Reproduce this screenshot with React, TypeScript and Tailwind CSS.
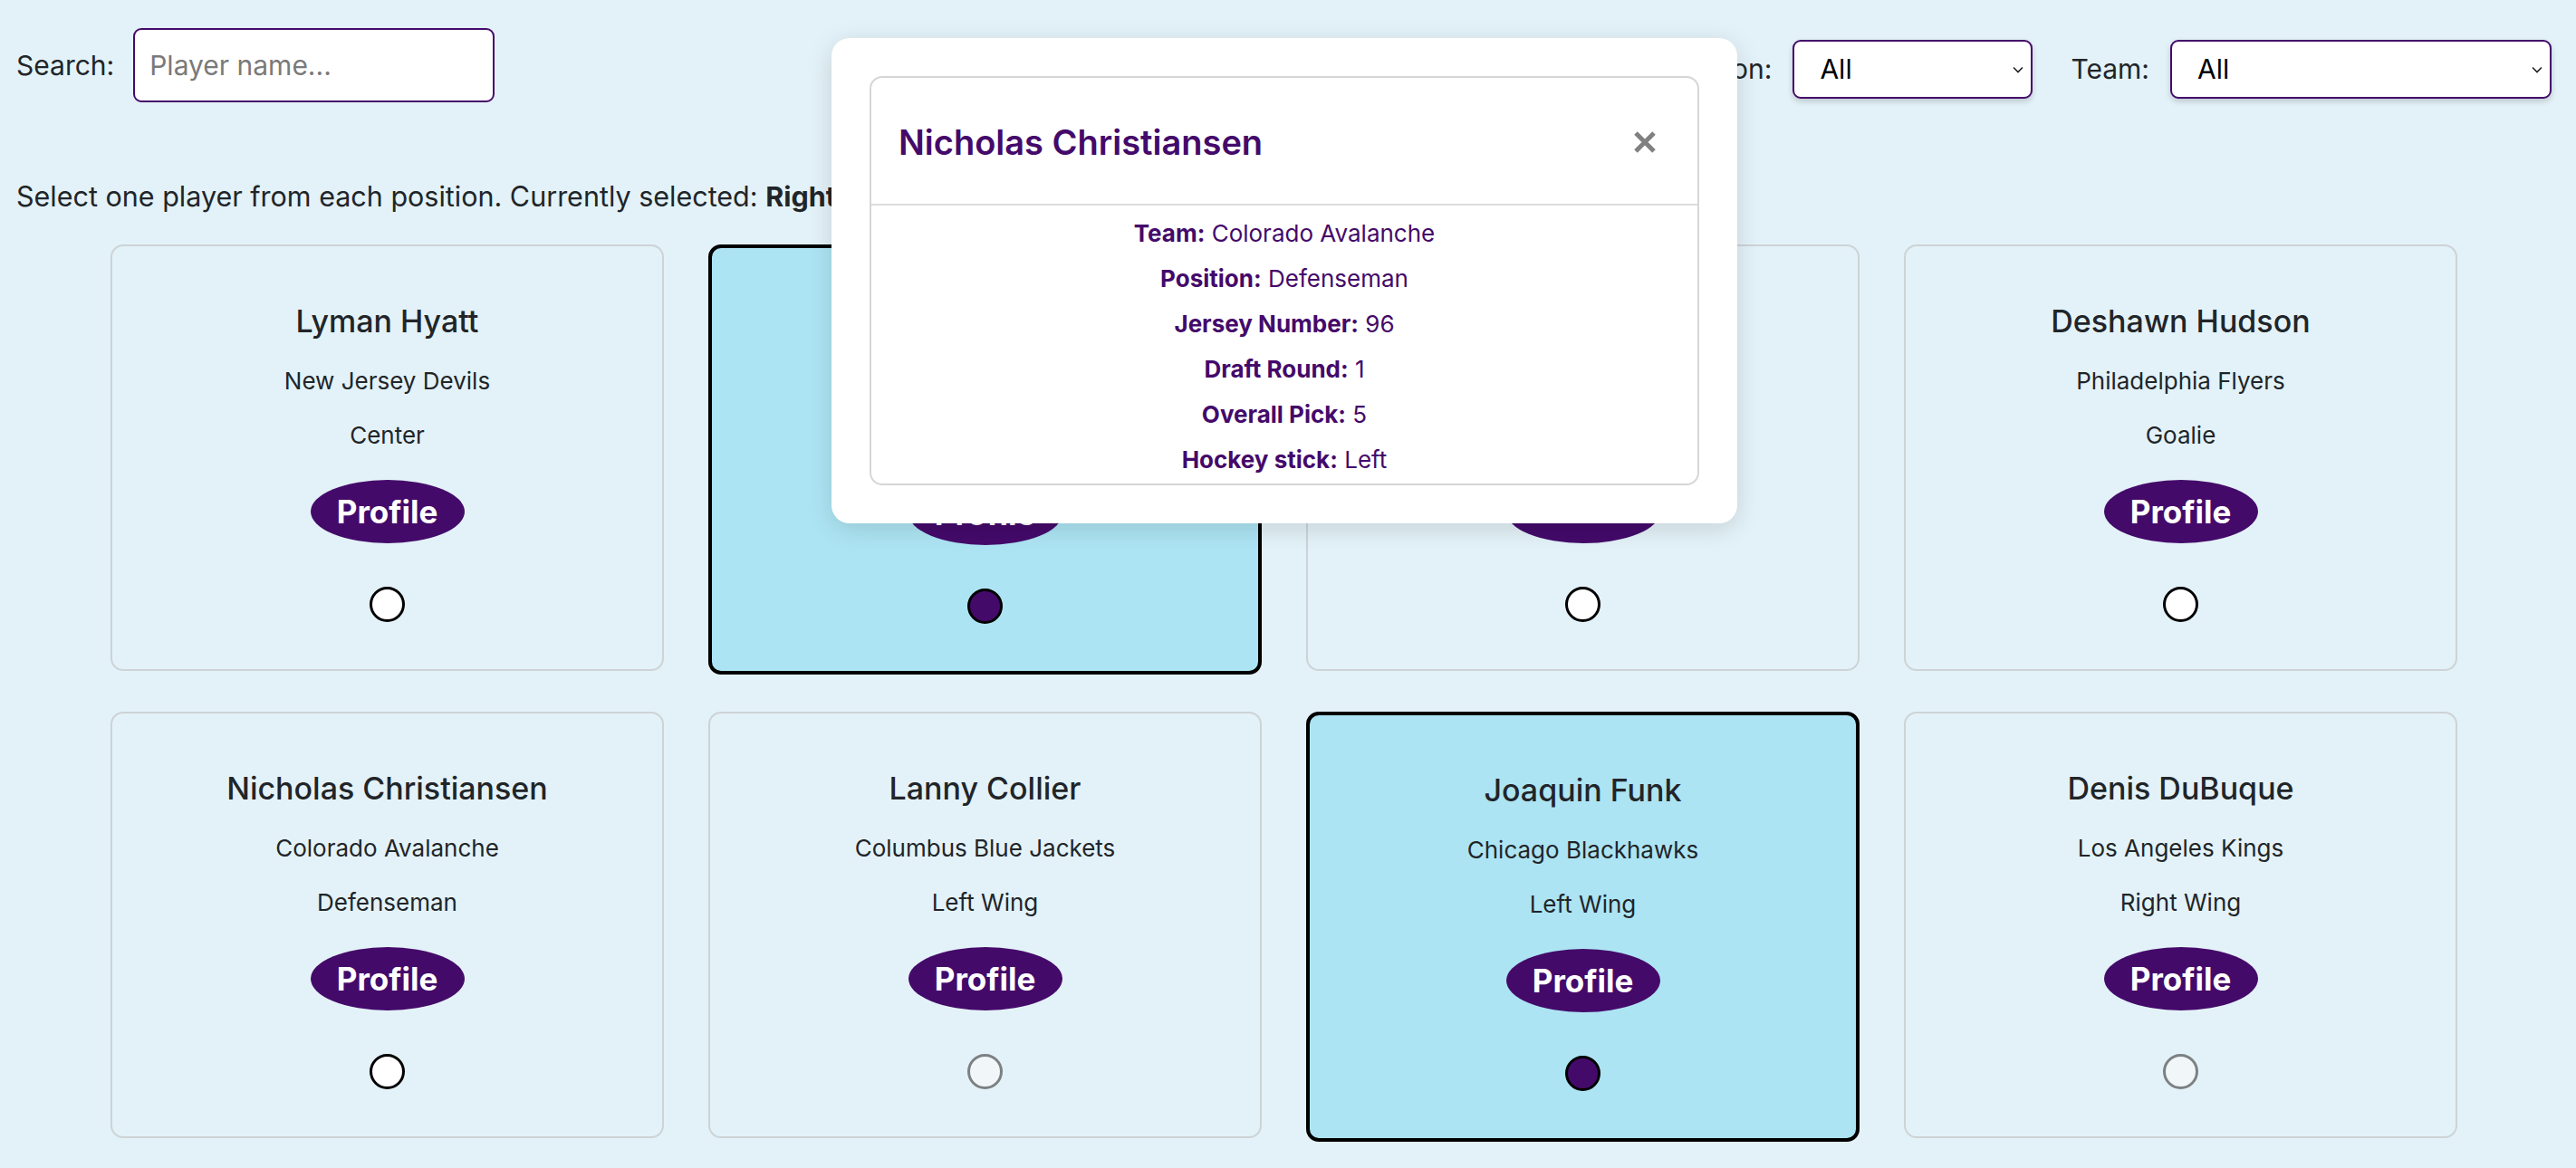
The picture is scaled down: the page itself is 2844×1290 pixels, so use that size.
import React from 'react';
import clsx from 'clsx';

type Player = {
	name: string;
	team: string;
	position: string;
	selected?: boolean;
	disabled?: boolean;
};

const players: Player[] = [
	{ name: 'Lyman Hyatt', team: 'New Jersey Devils', position: 'Center' },
	{ name: 'Elroy Bode', team: 'Boston Bruins', position: 'Right Wing', selected: true },
	{ name: 'Kaden Marvin', team: 'Tampa Bay Lightning', position: 'Defenseman' },
	{ name: 'Deshawn Hudson', team: 'Philadelphia Flyers', position: 'Goalie' },
	{ name: 'Nicholas Christiansen', team: 'Colorado Avalanche', position: 'Defenseman' },
	{ name: 'Lanny Collier', team: 'Columbus Blue Jackets', position: 'Left Wing', disabled: true },
	{ name: 'Joaquin Funk', team: 'Chicago Blackhawks', position: 'Left Wing', selected: true },
	{ name: 'Denis DuBuque', team: 'Los Angeles Kings', position: 'Right Wing', disabled: true }
];

const details = [
	{ label: 'Team:', value: 'Colorado Avalanche' },
	{ label: 'Position:', value: 'Defenseman' },
	{ label: 'Jersey Number:', value: '96' },
	{ label: 'Draft Round:', value: '1' },
	{ label: 'Overall Pick:', value: '5' },
	{ label: 'Hockey stick:', value: 'Left' }
];

const Chevron = () => (
	<svg
		className="pointer-events-none absolute right-[10px] top-1/2 -translate-y-1/2"
		width="12"
		height="8"
		viewBox="0 0 12 8"
		fill="none"
	>
		<path d="M1 1.5 6 6.5 11 1.5" stroke="#222" strokeWidth="1.6" />
	</svg>
);

const FilterSelect = ({ width }: { width: string }) => (
	<div className={clsx('relative h-[65px]', width)}>
		<select className="h-full w-full appearance-none rounded-[9px] border-2 border-[#440a6a] bg-white pl-[28px] text-[30px] text-black shadow-[0_3px_6px_rgba(0,0,0,0.18)] outline-none">
			<option>All</option>
		</select>
		<Chevron />
	</div>
);

const PlayerCard = ({ p }: { p: Player }) => (
	<div
		className={clsx(
			'flex flex-col items-center rounded-[14px] pt-[61px] pb-[52px]',
			p.selected ? 'border-4 border-black bg-[#ade4f3]' : 'border-2 border-[#cdd3d6]'
		)}
	>
		<h5 className="text-[34px] font-medium leading-[43px]">{p.name}</h5>
		<p className="mt-[15px] text-[26px] leading-[60px]">{p.team}</p>
		<p className="text-[26px] leading-[60px]">{p.position}</p>
		<button className="mt-[19px] h-[70px] w-[170px] rounded-[50%] bg-[#440a6a] text-[35px] font-bold text-white">
			Profile
		</button>
		<input
			type="radio"
			readOnly
			checked={!!p.selected}
			disabled={p.disabled}
			className={clsx(
				'mt-[48px] h-[39px] w-[39px] appearance-none rounded-full border-[3px]',
				p.selected && 'border-black bg-[#440a6a]',
				!p.selected && !p.disabled && 'border-black bg-white',
				p.disabled && 'border-[#7c8184] bg-[#f1f6f9]'
			)}
		/>
	</div>
);

const App = () => {
	return (
		<div className="relative h-[1290px] w-[2844px] overflow-hidden bg-[#e3f2f8] font-[Inter,sans-serif] text-[#212529]">
			{/* filters */}
			<div className="flex items-start justify-between pt-[31px] pl-[18px] pr-[27px]">
				<div className="flex items-center gap-[21px]">
					<label className="text-[30px]">Search:</label>
					<input
						placeholder="Player name..."
						className="h-[82px] w-[399px] rounded-[9px] border-2 border-[#440a6a] bg-white px-[16px] text-[30px] outline-none placeholder:text-[#7a7a7a]"
					/>
				</div>

				<div className="mt-[13px] flex items-center">
					<label className="mr-[23px] text-[30px]">Position:</label>
					<FilterSelect width="w-[265px]" />
					<label className="ml-[42px] mr-[23px] text-[30px]">Team:</label>
					<FilterSelect width="w-[421px]" />
				</div>
			</div>

			<p className="mt-[82px] pl-[18px] text-[30.5px] leading-[43px]">
				Select one player from each position. Currently selected: <b>Right Wing, Left Wing</b>
			</p>

			<div className="mt-[32px] ml-[122px] grid grid-cols-[repeat(4,611px)] items-start gap-x-[49px] gap-y-[41px]">
				{players.map((p, i) => (
					<PlayerCard key={i} p={p} />
				))}
			</div>

			{/* profile popup */}
			<div className="absolute left-[918px] top-[42px] h-[536px] w-[1000px] rounded-[20px] bg-white p-[42px] shadow-[0_6px_28px_rgba(0,0,0,0.13)]">
				<div className="flex h-full flex-col rounded-[14px] border-2 border-[#d6d6d6]">
					<div className="flex h-[141px] items-center justify-between border-b-2 border-[#dcdcdc] pt-[3px] pl-[30px] pr-[45px]">
						<h5 className="text-[38px] font-semibold text-[#440a6a]">Nicholas Christiansen</h5>
						<svg width="26" height="24" viewBox="0 0 26 24">
							<path d="M3 2 23 22M23 2 3 22" stroke="#808080" strokeWidth="5" />
						</svg>
					</div>
					<div className="pt-[6px] text-center text-[26px] leading-[50px] text-[#440a6a]">
						{details.map((d) => (
							<p key={d.label}>
								<b>{d.label}</b> {d.value}
							</p>
						))}
					</div>
				</div>
			</div>
		</div>
	);
};

export default App;
